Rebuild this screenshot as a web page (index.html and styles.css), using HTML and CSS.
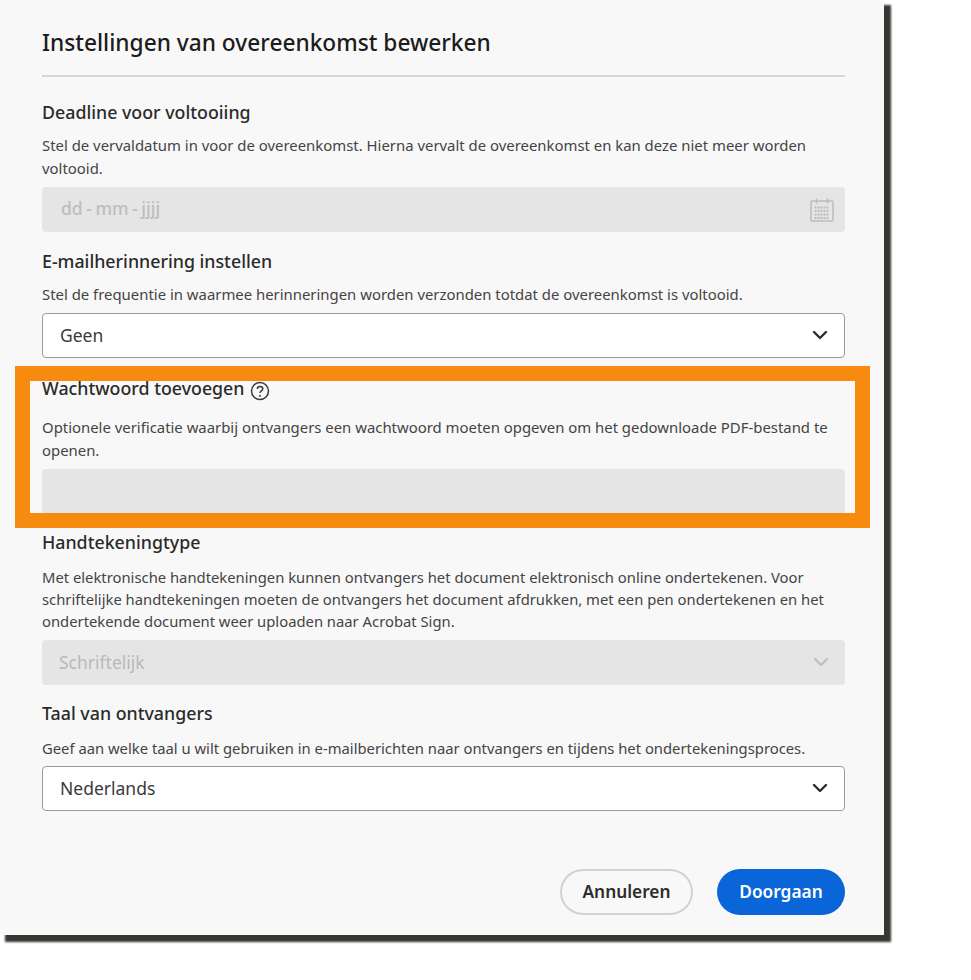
FILE: index.html
```html
<!DOCTYPE html>
<html lang="nl">
<head>
    <meta charset="UTF-8">
    <title>Instellingen van overeenkomst bewerken</title>
    <link rel="stylesheet" href="styles.css">
</head>
<body>
    <div class="panel">
        <h1>Instellingen van overeenkomst bewerken</h1>

        <div class="section first">
            <h3>Deadline voor voltooiing</h3>
            <p>Stel de vervaldatum in voor de overeenkomst. Hierna vervalt de overeenkomst en kan deze niet meer worden voltooid.</p>
            <div class="field disabled">
                <span class="date-text">dd - mm - jjjj</span>
                <svg class="calendar" width="26" height="26" viewBox="0 0 26 26" fill="none" stroke="#bcbcbc" stroke-width="1.5">
                    <rect x="2" y="4" width="22" height="20" rx="1"/>
                    <path d="M7.5 1.5v5M18.5 1.5v5"/>
                    <path d="M5.5 10.5h15M5.500 14h15M5.500 17.500h15M5.500 21h15" stroke-width="2" stroke-dasharray="2 1"/>
                </svg>
            </div>
        </div>

        <div class="section">
            <h3>E-mailherinnering instellen</h3>
            <p>Stel de frequentie in waarmee herinneringen worden verzonden totdat de overeenkomst is voltooid.</p>
            <div class="field">
                <span>Geen</span>
                <svg class="chevron" width="16" height="10" viewBox="0 0 16 10" fill="none" stroke="#2c2c2c" stroke-width="2.400" stroke-linecap="round" stroke-linejoin="round">
                    <path d="M2 2l6 6 6-6"/>
                </svg>
            </div>
        </div>

        <div class="section password">
            <h3>Wachtwoord toevoegen
                <svg class="help" width="20" height="20" viewBox="0 0 20 20" fill="none" stroke="#3a3a3a" stroke-width="1.500">
                    <circle cx="10" cy="10" r="8.500"/>
                    <path d="M7.300 8c0-1.600 1.200-2.600 2.800-2.600s2.700 1 2.700 2.300c0 1.100-.7 1.700-1.500 2.200-.8.500-1.300 1-1.300 2"/>
                    <circle cx="10" cy="14.800" r=".6" fill="#3a3a3a" stroke-width="1"/>
                </svg>
            </h3>
            <p>Optionele verificatie waarbij ontvangers een wachtwoord moeten opgeven om het gedownloade PDF-bestand te openen.</p>
            <div class="field disabled"></div>
        </div>

        <div class="section compact">
            <h3>Handtekeningtype</h3>
            <p class="tight">Met elektronische handtekeningen kunnen ontvangers het document elektronisch online ondertekenen. Voor schriftelijke handtekeningen moeten de ontvangers het document afdrukken, met een pen ondertekenen en het ondertekende document weer uploaden naar Acrobat Sign.</p>
            <div class="field disabled">
                <span class="muted">Schriftelijk</span>
                <svg class="chevron" width="16" height="10" viewBox="0 0 16 10" fill="none" stroke="#c0c0c0" stroke-width="2.400" stroke-linecap="round" stroke-linejoin="round">
                    <path d="M2 2l6 6 6-6"/>
                </svg>
            </div>
        </div>

        <div class="section compact">
            <h3>Taal van ontvangers</h3>
            <p class="wide">Geef aan welke taal u wilt gebruiken in e-mailberichten naar ontvangers en tijdens het ondertekeningsproces.</p>
            <div class="field">
                <span>Nederlands</span>
                <svg class="chevron" width="16" height="10" viewBox="0 0 16 10" fill="none" stroke="#2c2c2c" stroke-width="2.400" stroke-linecap="round" stroke-linejoin="round">
                    <path d="M2 2l6 6 6-6"/>
                </svg>
            </div>
        </div>

        <div class="actions">
            <button class="btn-cancel">Annuleren</button>
            <button class="btn-next">Doorgaan</button>
        </div>
    </div>

    <div class="highlight"></div>
</body>
</html>
```

FILE: styles.css
```css
html, body {
    margin: 0;
    padding: 0;
    background-color: white;
}
body {
    font-family: "Noto Sans", "Open Sans", sans-serif;
    height: 980px;
    overflow: hidden;
    position: relative;
}
.panel {
    width: 884px;
    height: 935px;
    box-sizing: border-box;
    padding: 27px 39px 0 42px;
    background-color: #f8f8f8;
    box-shadow: 6px 6px 2px 1px #383632;
}
h1 {
    margin: 0;
    padding-bottom: 16px;
    border-bottom: 2px solid #d6d6d6;
    font-size: 22.7px;
    line-height: 32px;
    font-weight: 500;
    color: #1c1c1c;
}
h3 {
    margin: 0;
    font-size: 17.8px;
    line-height: 24px;
    font-weight: 500;
    color: #2a2a2a;
}
p {
    margin: 10px 0 7px;
    font-size: 14.9px;
    line-height: 23px;
    color: #444;
}
p.tight {
    font-size: 14.8px;
    line-height: 22px;
    margin: 12px 0 8px;
}
p.wide {
    font-size: 14.8px;
    margin: 12px 0 6px;
}
.section {
    margin-top: 17px;
}
.section.first {
    margin-top: 23px;
}
.section.password {
    margin-top: 18px;
}
.section.compact {
    margin-top: 16px;
}
.section.password p {
    margin-top: 15px;
}
.field {
    height: 45px;
    box-sizing: border-box;
    padding: 0 17px 2px;
    display: flex;
    align-items: center;
    justify-content: space-between;
    border: 1.5px solid #9a9a9a;
    border-radius: 4px;
    background-color: white;
    font-size: 17.5px;
    color: #3a3a3a;
}
.field.disabled {
    border: none;
    background-color: #e5e5e5;
}
.date-text {
    padding: 0 0 1px 2px;
    color: #bdbdbd;
    font-weight: 500;
    word-spacing: -1px;
}
.muted {
    color: #b9b9b9;
}
.calendar {
    margin: 2px -7px 0 0;
}
.chevron {
    margin: 1px -1px 0 0;
}
.help {
    vertical-align: -6px;
    margin-left: 1px;
}
.actions {
    display: flex;
    justify-content: flex-end;
    gap: 24px;
    margin-top: 58px;
}
button {
    height: 46px;
    padding: 0 0 2px;
    border-radius: 23px;
    font-family: inherit;
    font-size: 17.3px;
    font-weight: 600;
    cursor: pointer;
}
.btn-cancel {
    width: 133px;
    background-color: #f8f8f8;
    border: 2px solid #d2d2d2;
    color: #2c2c2c;
}
.btn-next {
    width: 128px;
    background-color: #0a66d8;
    border: none;
    color: white;
}
/* oranje kader over het wachtwoordblok */
.highlight {
    position: absolute;
    left: 15px;
    top: 366px;
    width: 855px;
    height: 162px;
    box-sizing: border-box;
    border: 15px solid #f68b0f;
}
```
